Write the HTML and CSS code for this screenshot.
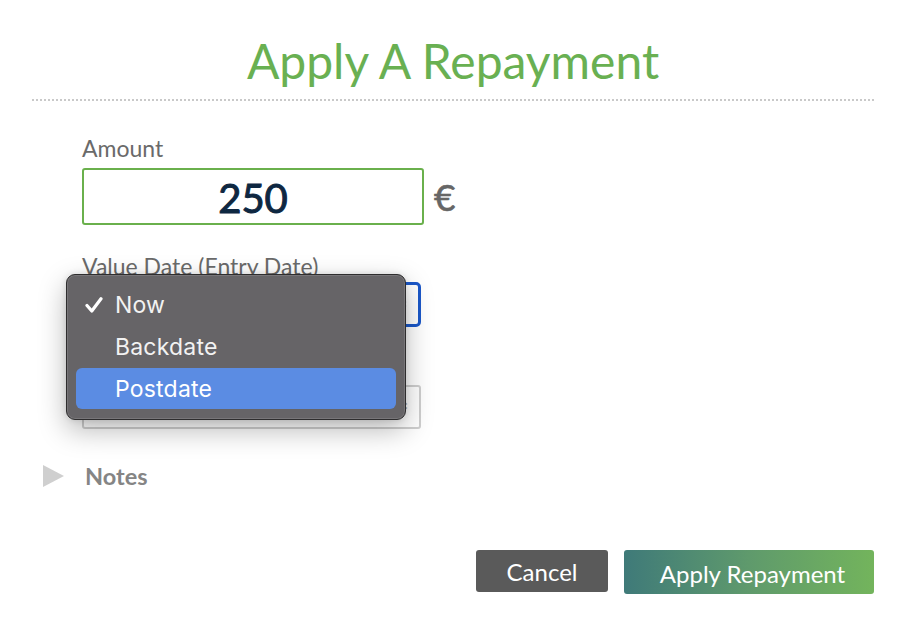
FILE: index.html
```html
<!DOCTYPE html>
<html lang="en">
<head>
<meta charset="utf-8">
<title>Apply A Repayment</title>
<link rel="stylesheet" href="styles.css">
</head>
<body>
<div class="page">
  <h1 class="title">Apply A Repayment</h1>
  <div class="divider"></div>
  <div class="form">
    <div class="field">
      <div class="label">Amount</div>
      <div class="amount-row">
        <div class="amount-input">250</div>
        <span class="currency">€</span>
      </div>
    </div>
    <div class="field field-gap field-date">
      <div class="label">Value Date (Entry Date)</div>
      <div class="select select-focused">
        <svg class="chev" width="8" height="12" viewBox="0 0 8 12"><path d="M1 4.5 4 1.5 7 4.5M1 7.5 4 10.5 7 7.5" fill="none" stroke="#9fb3c8" stroke-width="1.4"/></svg>
      </div>
      <div class="menu">
        <div class="menu-item">
          <svg class="check" width="18" height="16" viewBox="0 0 18 16"><path d="M2 8.5 6.8 14 16 1.8" fill="none" stroke="#ffffff" stroke-width="3.2" stroke-linecap="round" stroke-linejoin="round"/></svg>
          Now
        </div>
        <div class="menu-item">Backdate</div>
        <div class="menu-item menu-item-active">Postdate</div>
      </div>
    </div>
    <div class="field field-gap">
      <div class="label">Date</div>
      <div class="select select-plain">
        <svg class="chev" width="8" height="12" viewBox="0 0 8 12"><path d="M1 4.5 4 1.5 7 4.5M1 7.5 4 10.5 7 7.5" fill="none" stroke="#9fb3c8" stroke-width="1.4"/></svg>
      </div>
    </div>
  </div>
  <div class="notes">
    <span class="triangle"></span>
    <span class="notes-text">Notes</span>
  </div>
  <div class="actions">
    <button class="btn btn-cancel" type="button">Cancel</button>
    <button class="btn btn-apply" type="button">Apply Repayment</button>
  </div>
</div>
</body>
</html>
```

FILE: styles.css
```css
* { box-sizing: border-box; }

html, body {
  margin: 0;
  padding: 0;
  background: #ffffff;
}

body {
  font-family: Lato, "Open Sans", "Liberation Sans", sans-serif;
  width: 902px;
  height: 624px;
  overflow: hidden;
}

.page {
  padding: 0 28px 0 32px;
}

.title {
  margin: 0;
  padding-top: 31px;
  font-size: 48px;
  line-height: 60px;
  font-weight: 400;
  color: #69b052;
  text-align: center;
}

.divider {
  margin-top: 8px;
  border-top: 2px dotted #c9c9c9;
}

.form {
  margin-top: 33px;
  padding-left: 50px;
}

.field {
  position: relative;
}

.field-gap {
  margin-top: 27px;
}

.label {
  font-size: 23px;
  line-height: 28px;
  color: #6a6a6a;
}

.amount-row {
  margin-top: 6px;
  display: flex;
  align-items: center;
}

.amount-input {
  width: 342px;
  height: 57px;
  border: 2px solid #6ab04c;
  border-radius: 3px;
  display: flex;
  align-items: center;
  justify-content: center;
  font-size: 40px;
  font-weight: 400;
  color: #0e2741;
  padding-top: 3px;
  -webkit-text-stroke: 1px #0e2741;
}

.currency {
  margin-left: 10px;
  font-size: 37px;
  font-weight: 400;
  color: #666666;
  line-height: 1;
  -webkit-text-stroke: 0.6px #666666;
}

.select {
  position: relative;
  width: 339px;
  margin-top: 2px;
}

.select-focused {
  height: 45px;
  border: 3px solid #1b58c9;
  border-radius: 5px;
}

.select-plain {
  margin-top: 3px;
  height: 44px;
  border: 2px solid #cfcfcf;
  border-radius: 3px;
}

.chev {
  position: absolute;
  right: 11px;
  top: 50%;
  margin-top: -7px;
}

.menu {
  position: absolute;
  left: -16px;
  top: 22px;
  width: 340px;
  height: 146px;
  padding: 9px 9px;
  background: #666467;
  border: 1px solid #2e2d2e;
  border-radius: 9px;
  box-shadow: inset 0 0 0 1px rgba(255, 255, 255, 0.12), 0 10px 28px rgba(0, 0, 0, 0.28), 0 0 6px rgba(0, 0, 0, 0.12);
  z-index: 10;
}

.menu-item {
  position: relative;
  height: 42px;
  padding-left: 39px;
  font-family: Inter, "Noto Sans", sans-serif;
  font-size: 23px;
  letter-spacing: 0.2px;
  line-height: 43px;
  color: #f2f2f2;
  border-radius: 6px;
}

.menu-item-active {
  height: 41px;
  background: #5b8ce3;
  color: #ffffff;
}

.check {
  position: absolute;
  left: 9px;
  top: 13px;
}

.notes {
  margin-top: 33px;
  margin-left: 11px;
  display: flex;
  align-items: center;
  gap: 21px;
  height: 28px;
}

.triangle {
  width: 0;
  height: 0;
  border-top: 11.5px solid transparent;
  border-bottom: 11.5px solid transparent;
  border-left: 21px solid #cfcfcf;
  filter: blur(0.4px);
}

.notes-text {
  font-size: 23.5px;
  line-height: 28px;
  font-weight: 700;
  color: #858585;
}

.actions {
  margin-top: 60px;
  display: flex;
  justify-content: flex-end;
  align-items: flex-start;
  gap: 16px;
}

.btn {
  border: none;
  margin: 0;
  font-family: Lato, "Open Sans", sans-serif;
  font-size: 24px;
  color: #ffffff;
  border-radius: 3px;
  cursor: pointer;
  padding: 0;
}

.btn-cancel {
  width: 132px;
  height: 42px;
  background: #5a5a5a;
}

.btn-apply {
  width: 250px;
  height: 44px;
  padding-top: 3px;
  padding-left: 7px;
  background: linear-gradient(90deg, #3f7a79 0%, #5f9a6c 50%, #73b45c 100%);
}
```
